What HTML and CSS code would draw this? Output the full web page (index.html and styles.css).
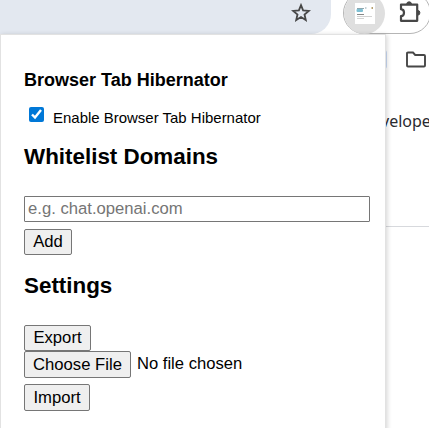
FILE: index.html
```html
<!DOCTYPE html>
<html lang="en">
<head>
<meta charset="utf-8">
<title>Browser Tab Hibernator</title>
<link rel="stylesheet" href="styles.css">
</head>
<body>
<header class="toolbar">
  <div class="address">
    <svg class="star" width="20" height="20" viewBox="0 0 20 20"><path d="M10 2.2 12.1 7.4 17.8 7.9 13.5 11.5 14.8 17.1 10 14.1 5.2 17.1 6.5 11.5 2.2 7.9 7.9 7.4Z"/></svg>
  </div>
  <div class="extensions">
    <div class="active-extension">
      <svg width="20" height="21" viewBox="0 0 20 21"><path fill="#fff" d="M0 0h20v21H0z"/><path d="M2 5.5h7M10 5h1.5" stroke="#8fa6ae"/><rect x="1.5" y="6" width="6.5" height="3" rx="1" fill="#7dbfd3"/><path d="M2 11.5h7" stroke="#888"/><path d="M2 13.5h15M2 15.5h7" stroke="#d2d2d2"/><path d="M16.5 5h1.5" stroke="#b5a070" stroke-width="2"/></svg>
    </div>
    <svg class="puzzle" width="24" height="24" viewBox="0 0 24 24"><path d="M3 4.6H19.2V20.8H3V16.2C7 15.8 7 9.6 3 9.2Z"/><path class="knob" d="M8.7 4.2a2.4 2.4 0 0 1 4.8 0ZM19.5 10.4a2.4 2.4 0 0 1 0 4.8Z"/></svg>
  </div>
</header>
<div class="bookmarks">
  <span class="bookmark-chip"></span>
  <svg class="folder" width="22" height="18" viewBox="0 0 22 18"><path d="M2 2.5Q2 1.5 3 1.5H8L10.2 4H19Q20 4 20 5V14.5Q20 15.5 19 15.5H3Q2 15.5 2 14.5Z"/></svg>
</div>
<div class="site"><span>velope</span></div>
<main class="popup">
  <h3>Browser Tab Hibernator</h3>
  <label class="enable"><input type="checkbox" checked><span>Enable Browser Tab Hibernator</span></label>
  <h2 class="domains">Whitelist Domains</h2>
  <input class="domain" type="text" placeholder="e.g. chat.openai.com">
  <button class="add">Add</button>
  <h2 class="settings">Settings</h2>
  <button class="export">Export</button>
  <div class="file"><button class="choose">Choose File</button><span>No file chosen</span></div>
  <button class="import">Import</button>
</main>
</body>
</html>
```
FILE: styles.css
```css
* { box-sizing: border-box; }
body {
  margin: 0;
  width: 429px;
  height: 428px;
  overflow: hidden;
  position: relative;
  background: #fff;
  font-family: "Liberation Sans", Arial, sans-serif;
  color: #000;
}
.toolbar {
  height: 34px;
  display: flex;
  align-items: flex-start;
}
.address {
  flex: none;
  width: 331px;
  height: 34px;
  background: #e3e8f0;
  border-radius: 0 0 20px 0;
  display: flex;
  justify-content: flex-end;
  padding: 3px 20px 0 0;
}
.star { fill: none; stroke: #474747; stroke-width: 1.8; }
.extensions {
  flex: none;
  margin: -8px 0 0 12px;
  width: 88px;
  height: 42px;
  border: 1px solid #b5b5b5;
  border-radius: 21px;
  display: flex;
}
.active-extension {
  flex: none;
  width: 41px;
  height: 41px;
  border-radius: 50%;
  background: #dfdfdf;
  padding: 10px 0 0 11px;
}
.puzzle { flex: none; margin: 7px 0 0 13px; fill: none; stroke: #474747; stroke-width: 2.2; stroke-linejoin: round; }
.puzzle .knob { fill: #474747; stroke-width: 1; }
.bookmarks {
  height: 49px;
  display: flex;
  align-items: flex-start;
  padding: 16px 0 0 377px;
}
.bookmark-chip { flex: none; width: 10px; height: 19px; background: #cbdcf7; border-radius: 0 3px 3px 0; }
.folder { flex: none; margin: 1px 0 0 18px; fill: none; stroke: #474747; stroke-width: 1.9; }
.site {
  height: 144px;
  border-bottom: 1px solid #d7d9dd;
  padding: 27px 0 0 381px;
  font: 16px/22px "Noto Sans", sans-serif;
  color: #292a30;
}
.popup {
  position: absolute;
  left: 0;
  top: 34px;
  width: 386px;
  height: 410px;
  background: #fff;
  border: 1px solid #e2e2e2;
  box-shadow: 1px 1px 5px rgba(0, 0, 0, .18);
  padding: 34px 15px 0 23px;
  display: flex;
  flex-direction: column;
  align-items: flex-start;
}
h2, h3 { margin: 0; }
h3 { font-size: 18px; line-height: 22px; }
h2 { font-size: 22.4px; line-height: 26px; }
.enable { display: flex; height: 22px; margin-top: 15px; font-size: 14.98px; line-height: 22px; }
.enable input { width: 15px; height: 15px; margin: 1px 9px 0 5px; accent-color: #0078d7; }
.enable span { padding-top: 1px; }
.domains { margin-top: 16px; }
.domain {
  width: 346px;
  height: 26px;
  margin: 26px 0 0;
  padding: 0 3px;
  border: 1px solid #767676;
  border-radius: 1px;
  font: 16.67px "Liberation Sans", Arial, sans-serif;
}
.domain::placeholder { color: #757575; }
button {
  height: 26px;
  padding: 0;
  border: 1px solid #767676;
  border-radius: 2px;
  background: #efefef;
  color: #000;
  font: 16.67px/22px "Liberation Sans", Arial, sans-serif;
}
.add { width: 48px; margin-top: 7px; }
.settings { margin-top: 18px; }
.export { width: 67px; margin-top: 26px; }
.file { display: flex; gap: 6px; height: 27px; font-size: 16.6px; line-height: 25px; }
.choose { width: 107px; height: 27px; }
.import { width: 66px; height: 27px; margin-top: 6px; }
```
